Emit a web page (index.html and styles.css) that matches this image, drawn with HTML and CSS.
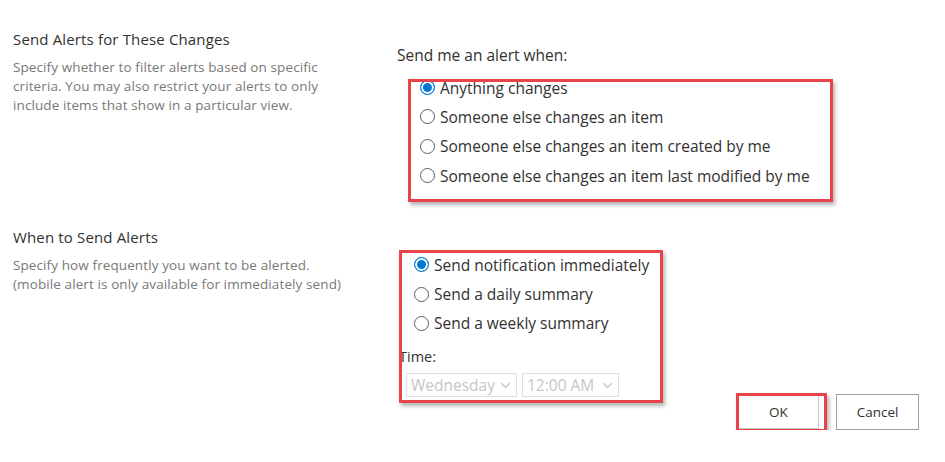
FILE: index.html
```html
<!DOCTYPE html>
<html lang="en">
<head>
    <meta charset="utf-8">
    <title>Alert settings</title>
    <link rel="stylesheet" href="styles.css">
</head>
<body>
<div class="page">

    <div class="section first">
        <div class="info">
            <h3>Send Alerts for These Changes</h3>
            <p>Specify whether to filter alerts based on specific criteria. You may also restrict your alerts to only include items that show in a particular view.</p>
        </div>
        <div class="choices">
            <div class="label">Send me an alert when:</div>
            <div class="options changes">
                <label class="option"><input type="radio" name="change" checked> Anything changes</label>
                <label class="option"><input type="radio" name="change"> Someone else changes an item</label>
                <label class="option"><input type="radio" name="change"> Someone else changes an item created by me</label>
                <label class="option"><input type="radio" name="change"> Someone else changes an item last modified by me</label>
            </div>
        </div>
    </div>

    <div class="section second">
        <div class="info">
            <h3>When to Send Alerts</h3>
            <p>Specify how frequently you want to be alerted. (mobile alert is only available for immediately send)</p>
        </div>
        <div class="choices">
            <div class="options timing">
                <label class="option"><input type="radio" name="when" checked> Send notification immediately</label>
                <label class="option"><input type="radio" name="when"> Send a daily summary</label>
                <label class="option"><input type="radio" name="when"> Send a weekly summary</label>
            </div>
            <div class="time-label">Time:</div>
            <div class="time">
                <div class="dropdown day">Wednesday
                    <svg width="11" height="7" viewBox="0 0 11 7"><path d="M1 1l4.5 4.5L10 1" fill="none" stroke="#c8c6c4" stroke-width="1.4"/></svg>
                </div>
                <div class="dropdown hour">12:00 AM
                    <svg width="11" height="7" viewBox="0 0 11 7"><path d="M1 1l4.5 4.5L10 1" fill="none" stroke="#c8c6c4" stroke-width="1.4"/></svg>
                </div>
            </div>
        </div>
    </div>

    <div class="buttons">
        <button class="ok">OK</button>
        <button class="cancel">Cancel</button>
    </div>

    <div class="mark mark-changes"></div>
    <div class="mark mark-timing"></div>
    <div class="mark mark-ok"></div>
</div>
</body>
</html>
```

FILE: styles.css
```css
* {
    box-sizing: border-box;
}
body {
    margin: 0;
    background: white;
    font-family: "Open Sans", "Noto Sans", sans-serif;
    color: #323130;
}
.page {
    position: relative;
    padding: 29px 26px 0 13px;
}
.section {
    display: grid;
    grid-template-columns: 384px 1fr;
}
.second {
    margin-top: 37px;
}
h3 {
    margin: 0;
    font-size: 15px;
    line-height: 20px;
    font-weight: normal;
    letter-spacing: 0.15px;
}
p {
    margin: 9px 0 0;
    width: 336px;
    font-size: 13.5px;
    line-height: 19px;
    color: #7a7876;
    letter-spacing: 0.1px;
}
.first .choices {
    padding-top: 16px;
}
.second .choices {
    padding-top: 23px;
}
.label {
    font-size: 15.5px;
    line-height: 20px;
}
.options {
    display: flex;
    flex-direction: column;
}
.changes {
    margin-top: 8px;
    padding-left: 23px;
}
.timing {
    padding-left: 17px;
}
.option {
    display: flex;
    align-items: center;
    height: 29.3px;
    gap: 5px;
    font-size: 15.5px;
    white-space: nowrap;
}
.option input {
    appearance: none;
    margin: 0;
    width: 15px;
    height: 15px;
    border: 1px solid #605e5c;
    border-radius: 50%;
    background: white;
}
.option input:checked {
    border-color: #0078d4;
    background: #0078d4;
    box-shadow: inset 0 0 0 2px white;
}
.time-label {
    margin-top: 9px;
    padding-left: 2px;
    font-size: 14.5px;
    line-height: 20px;
}
.time {
    display: flex;
    gap: 5px;
    margin-top: 6px;
    padding-left: 9px;
}
.dropdown {
    display: flex;
    align-items: center;
    justify-content: space-between;
    height: 24px;
    padding: 0 5px 0 4px;
    border: 1px solid #e1dfdd;
    font-size: 15.5px;
    color: #c8c6c4;
}
.day {
    width: 111px;
}
.hour {
    width: 97px;
}
.buttons {
    display: flex;
    justify-content: flex-end;
    gap: 17px;
    margin-top: -3px;
}
button {
    height: 35px;
    background: white;
    font-family: inherit;
    font-size: 13.5px;
    color: #323130;
}
.ok {
    width: 81px;
    border: 1px solid #c8c6c4;
}
.cancel {
    width: 83px;
    height: 36px;
    border: 1px solid #a19f9d;
}
.mark {
    position: absolute;
    border: 3px solid #e8424b;
    box-shadow: 2px 3px 4px rgba(0, 0, 0, 0.3);
}
.mark-changes {
    left: 408px;
    top: 79px;
    width: 425px;
    height: 123px;
}
.mark-timing {
    left: 399px;
    top: 250px;
    width: 264px;
    height: 153px;
}
.mark-ok {
    left: 736px;
    top: 393px;
    width: 91px;
    height: 39px;
}
```
